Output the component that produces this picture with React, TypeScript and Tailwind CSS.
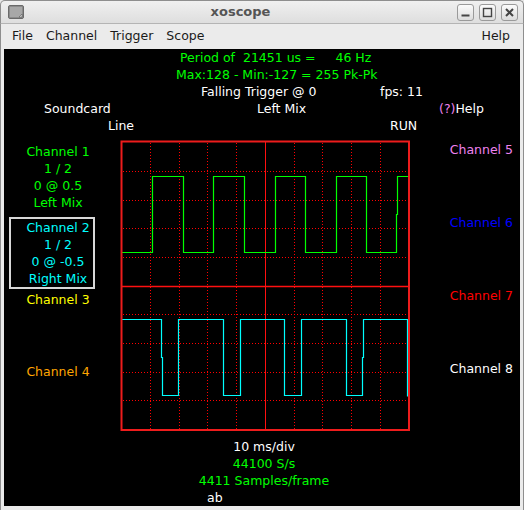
import React from "react";

const FONT = "font-['DejaVu_Sans',sans-serif]";

function TitleButton({ kind }: { kind: "min" | "max" | "close" }) {
  return (
    <div className="w-[17px] h-[17px] rounded-[3px] border border-[#9a9a9a] bg-gradient-to-b from-[#fbfbfb] to-[#dcdcdc] flex items-center justify-center">
      <svg width="11" height="11" viewBox="0 0 11 11">
        {kind === "min" && <rect x="1.5" y="7.5" width="8" height="2" fill="#444" />}
        {kind === "max" && (
          <rect x="1.5" y="1.5" width="8" height="8" fill="none" stroke="#444" strokeWidth="1.4" />
        )}
        {kind === "close" && (
          <path d="M2 2 L9 9 M9 2 L2 9" stroke="#444" strokeWidth="2" />
        )}
      </svg>
    </div>
  );
}

function AppIcon() {
  return (
    <svg width="16" height="14" viewBox="0 0 16 14" className="ml-[7px]">
      <rect x="0.5" y="0.5" width="15" height="13" rx="1.5" fill="#8c8c8c" stroke="#6a6a6a" />
      <rect x="2" y="2" width="12" height="10" fill="#a8a8a8" />
      <path d="M11 12 L14 9 L14 12 Z" fill="#eee" stroke="#555" strokeWidth="0.6" />
    </svg>
  );
}

function Plot() {
  const vx = [150, 179, 207, 236, 294, 322, 351, 380];
  const hy = [171, 200, 228, 257, 314, 343, 372, 400];
  const green =
    "M121 252 H152 V176 H183 V252 H213 V176 H244 V252 H275 V176 H305 V252 H336 V176 H366 V252 H396 V214 H397 V176 H408";
  const cyan =
    "M121 319 H161 V357 H162 V395 H178 V319 H223 V395 H240 V319 H284 V395 H301 V319 H346 V395 H362 V357 H363 V319 H407 V396";
  return (
    <svg width="292" height="292" className="mt-[6px] shrink-0 block">
      <g transform="translate(-120 -140)">
        {vx.map((x) => (
          <line key={"v" + x} x1={x + 0.5} y1={143} x2={x + 0.5} y2={429} stroke="#ff0000" strokeWidth="1" strokeDasharray="1 2" shapeRendering="crispEdges" />
        ))}
        {hy.map((y) => (
          <line key={"h" + y} x1={123} y1={y + 0.5} x2={408} y2={y + 0.5} stroke="#ff0000" strokeWidth="1" strokeDasharray="1 2" shapeRendering="crispEdges" />
        ))}
        <line x1={265.5} y1={141} x2={265.5} y2={430} stroke="#ff1010" strokeWidth="1" shapeRendering="crispEdges" />
        <line x1={121} y1={286.5} x2={409} y2={286.5} stroke="#ff1010" strokeWidth="1.5" />
        <g transform="translate(0.5 0.5)">
          <path d={green} fill="none" stroke="#00ff00" strokeWidth="1.2" />
          <path d={cyan} fill="none" stroke="#00ffff" strokeWidth="1.2" />
        </g>
        <rect x={121.5} y={141.5} width={287.5} height={288.5} fill="none" stroke="#ee1c1c" strokeWidth="2" />
      </g>
    </svg>
  );
}

export default function App() {
  return (
    <div className={`w-[524px] h-[510px] bg-[#e6e6e6] text-[12.5px] overflow-hidden ${FONT}`}>
      {/* title bar */}
      <div className="h-[24px] flex items-center rounded-t-[5px] border border-b-[#b4b4b4] border-[#8e8e8e] bg-gradient-to-b from-[#f0f0f0] to-[#dedede]">
        <AppIcon />
        <div className="flex-1 text-center font-bold text-[13px] text-[#555555]">xoscope</div>
        <div className="flex gap-[5px] pr-[5px]">
          <TitleButton kind="min" />
          <TitleButton kind="max" />
          <TitleButton kind="close" />
        </div>
      </div>

      <div className="border-x border-[#8e8e8e] h-[486px] bg-[#ebebeb] flex flex-col">
        {/* menu bar */}
        <div className="h-[25px] flex items-center pl-[11px] pr-[13px] gap-[13px] text-[#1a1a1a]">
          <span>File</span>
          <span>Channel</span>
          <span>Trigger</span>
          <span>Scope</span>
          <span className="ml-auto">Help</span>
        </div>

        {/* scope area */}
        <div className="ml-[3px] w-[516px] h-[457px] bg-black leading-[17px] text-white">
          <div className="pl-[176px] text-[#00ff00] whitespace-pre">Period of  21451 us =     46 Hz</div>
          <div className="pl-[172px] text-[#00ff00] whitespace-pre">Max:128 - Min:-127 = 255 Pk-Pk</div>
          <div className="flex pl-[197px]">
            <span className="w-[179px] shrink-0">Falling Trigger @ 0</span>
            <span>fps: 11</span>
          </div>
          <div className="flex pl-[40px]">
            <span className="w-[213px] shrink-0">Soundcard</span>
            <span className="w-[182px] shrink-0">Left Mix</span>
            <span>
              <span className="text-[#ee82ee]">(?)</span>Help
            </span>
          </div>
          <div className="flex pl-[104px]">
            <span className="w-[282px] shrink-0">Line</span>
            <span>RUN</span>
          </div>

          <div className="flex h-[298px]">
            {/* left channel labels */}
            <div className="w-[116px] shrink-0 pt-[9px] pl-[2px] flex flex-col">
              <div className="w-[104px] text-center text-[#00ff00]">
                <div>Channel 1</div>
                <div>1 / 2</div>
                <div>0 @ 0.5</div>
                <div>Left Mix</div>
              </div>
              <div className="mt-[6px] ml-[3px] w-[86px] border-2 border-[#d8d8d8] pl-[12px] text-center text-[#00ffff]">
                <div>Channel 2</div>
                <div>1 / 2</div>
                <div>0 @ -0.5</div>
                <div>Right Mix</div>
              </div>
              <div className="mt-[1.5px] w-[104px] text-center text-[#ffff00]">Channel 3</div>
              <div className="mt-[55px] w-[104px] text-center text-[#ffa500]">Channel 4</div>
            </div>

            <Plot />

            {/* right channel labels */}
            <div className="flex-1 pt-[6.5px] pr-[7px] flex flex-col items-end">
              <div className="text-[#ee82ee]">Channel 5</div>
              <div className="mt-[56px] text-[#0000ff]">Channel 6</div>
              <div className="mt-[56px] text-[#ff0000]">Channel 7</div>
              <div className="mt-[56px] text-white">Channel 8</div>
            </div>
          </div>

          <div className="pt-[5.5px] pl-[4px] text-center">
            <div>10 ms/div</div>
            <div className="text-[#00ff00]">44100 S/s</div>
            <div className="text-[#00ff00]">4411 Samples/frame</div>
          </div>
          <div className="pl-[203px]">ab</div>
        </div>
      </div>
    </div>
  );
}
